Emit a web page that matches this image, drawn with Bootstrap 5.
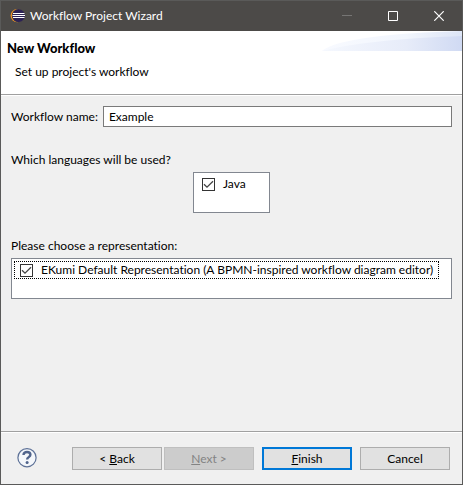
<!DOCTYPE html>
<html lang="en">
<head>
<meta charset="utf-8">
<meta name="viewport" content="width=device-width, initial-scale=1">
<title>Workflow Project Wizard</title>
<link href="https://cdn.jsdelivr.net/npm/bootstrap@5.3.0/dist/css/bootstrap.min.css" rel="stylesheet">
<style>
  body { font: 12px/16px Lato, "Open Sans", sans-serif; font-variant-ligatures: none; color: #000; background: #f0f0f0; }
  .wizard { border: 1px solid #5a5a59; }
  .titlebar { background: #4c4a48; color: #fff; height: 30px; padding-left: 9px; }
  .titlebar h1 { font-size: 12px; line-height: 16px; font-weight: 400; margin-left: 4px; }
  .win-btn { width: 46px; height: 30px; border: 0; background: none; color: #fff; }
  .win-btn:disabled { color: #767574; }
  .banner { background: #fff; height: 64px; padding: 9px 6px; border-bottom: 1px solid #a0a0a0; }
  .banner h2 { font-size: 13px; line-height: 16px; font-weight: 900; }
  .banner p { padding-left: 8px; margin-top: 8px; }
  .swoosh { width: 140px; height: 20px; }
  .content { border-top: 1px solid #fff; padding: 10px; }
  .field-gap { gap: 5px; }
  .name-input { height: 21px; border: 1px solid #7a7a7a; padding: 0 5px; background: #fff; color: #000; font: inherit; min-width: 0; }
  .name-input:focus { outline: 0; }
  .section { margin-top: 25px; }
  .pick-list { border: 1px solid #828790; background: #fff; height: 41px; padding: 2px; margin-top: 4px; }
  .pick-list.narrow { width: 77px; }
  .pick-row { height: 18px; padding: 0 5px; gap: 8px; border: 1px dotted transparent; white-space: nowrap; }
  .pick-row.focused { border-color: #000; }
  .tick { appearance: none; width: 13px; height: 13px; margin: 0; border: 1px solid #333; background: #fff; flex: none; }
  .tick:checked { background: #fff url("data:image/svg+xml,%3Csvg xmlns='http://www.w3.org/2000/svg' viewBox='0 0 11 11'%3E%3Cpath d='M1 5.200 4 8.200 10 2.200' fill='none' stroke='%23444' stroke-width='1.300'/%3E%3C/svg%3E") center/11px no-repeat; }
  .footer-bar { border-top: 1px solid #a0a0a0; box-shadow: inset 0 1px #fff; padding: 15px 12px 14px 15px; }
  .help-btn { border: 0; background: none; padding: 0; width: 22px; height: 22px; }
  .push { width: 90px; height: 23px; padding: 0; border: 1px solid #adadad; border-radius: 0; background: #e1e1e1; color: #000; font-size: 12px; line-height: 16px; }
  .push:disabled { background: #ccc; border-color: #bfbfbf; color: #838383; opacity: 1; }
  .push.default { border: 2px solid #0078d7; }
  .pair { gap: 2px; }
  .actions { gap: 8px; }
</style>
</head>
<body>
<main class="wizard min-vh-100 d-flex flex-column">
  <header class="titlebar d-flex align-items-center">
    <svg width="16" height="16" viewBox="0 0 16 16" aria-hidden="true">
      <circle cx="7.200" cy="7.600" r="6.600" fill="#f79421"/>
      <circle cx="8.400" cy="7.600" r="6.600" fill="#4c4a48"/>
      <circle cx="8.600" cy="7.600" r="6.300" fill="#2c2255"/>
      <path d="M3 5.500h11.500M2.500 7.500h12.500M3 9.500h11.500" stroke="#fff"/>
    </svg>
    <h1 class="mb-0 flex-grow-1">Workflow Project Wizard</h1>
    <button class="win-btn d-flex align-items-center justify-content-center" type="button" aria-label="Minimize" disabled>
      <svg width="10" height="10" viewBox="0 0 10 10"><path d="M0 4.500h10" stroke="currentColor"/></svg>
    </button>
    <button class="win-btn d-flex align-items-center justify-content-center" type="button" aria-label="Maximize">
      <svg width="10" height="10" viewBox="0 0 10 10"><path d="M.5.5h9v9h-9z" fill="none" stroke="currentColor"/></svg>
    </button>
    <button class="win-btn d-flex align-items-center justify-content-center" type="button" aria-label="Close">
      <svg width="10" height="10" viewBox="0 0 10 10"><path d="M.3.3l9.4 9.4M9.7.3.3 9.7" stroke="currentColor" stroke-width="1.2"/></svg>
    </button>
  </header>

  <section class="banner position-relative">
    <svg class="swoosh position-absolute top-0 end-0" viewBox="0 0 140 20" preserveAspectRatio="none" aria-hidden="true">
      <defs>
        <linearGradient id="outer"><stop offset="0" stop-color="#f8faff"/><stop offset=".6" stop-color="#f2f6fd"/><stop offset="1" stop-color="#dde5f6"/></linearGradient>
        <linearGradient id="inner"><stop offset="0" stop-color="#f5f8fe"/><stop offset=".6" stop-color="#e7ecf9"/><stop offset="1" stop-color="#d0daf3"/></linearGradient>
      </defs>
      <path d="M0 20C14 8 70 2 140 0v20z" fill="url(#outer)"/>
      <path d="M0 20C40 10 90 7 140 5v15z" fill="url(#inner)"/>
    </svg>
    <h2 class="mb-0">New Workflow</h2>
    <p class="mb-0">Set up project's workflow</p>
  </section>

  <form class="content flex-grow-1">
    <div class="d-flex align-items-center field-gap">
      <label for="wf-name">Workflow name:</label>
      <input class="name-input flex-grow-1" id="wf-name" type="text" value="Example">
    </div>

    <div class="section" role="group" aria-labelledby="lang-label">
      <div id="lang-label">Which languages will be used?</div>
      <div class="pick-list narrow mx-auto">
        <div class="pick-row d-flex align-items-center">
          <input class="tick" type="checkbox" id="java" checked>
          <label for="java">Java</label>
        </div>
      </div>
    </div>

    <div class="section" role="group" aria-labelledby="rep-label">
      <div id="rep-label">Please choose a representation:</div>
      <div class="pick-list">
        <div class="pick-row focused d-inline-flex align-items-center">
          <input class="tick" type="checkbox" id="ekumi" checked>
          <label for="ekumi">EKumi Default Representation (A BPMN-inspired workflow diagram editor)</label>
        </div>
      </div>
    </div>
  </form>

  <footer class="footer-bar d-flex align-items-center actions">
    <button class="help-btn me-auto" type="button" aria-label="Help">
      <svg class="d-block" width="22" height="22" viewBox="0 0 22 22">
        <circle cx="11" cy="9.700" r="9.100" fill="#f4f7fb" stroke="#5d7197" stroke-width="1.200"/>
        <path d="M7.500 6.900C7.500 4.700 9 4 11 4s3.400 1 3.400 2.800c0 2.300-3.300 2.400-3.300 4.700" fill="none" stroke="#50648c" stroke-width="2.400"/>
        <circle cx="11.100" cy="14.500" r="1.500" fill="#50648c"/>
      </svg>
    </button>
    <div class="d-flex pair">
      <button class="btn push" type="button">&lt; <u>B</u>ack</button>
      <button class="btn push" type="button" disabled><u>N</u>ext &gt;</button>
    </div>
    <button class="btn push default" type="submit"><u>F</u>inish</button>
    <button class="btn push" type="button">Cancel</button>
  </footer>
</main>
<script src="https://cdn.jsdelivr.net/npm/bootstrap@5.3.0/dist/js/bootstrap.bundle.min.js"></script>
</body>
</html>
